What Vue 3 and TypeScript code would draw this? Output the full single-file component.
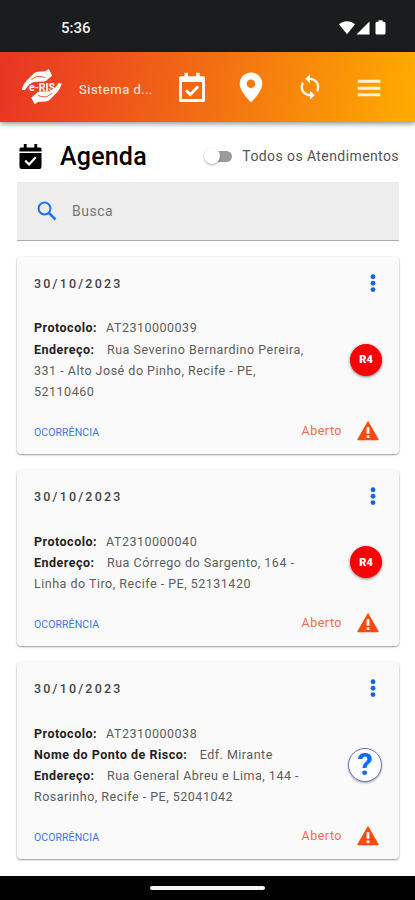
<script setup lang="ts">
interface Field {
  label: string
  lines: string[]
  wide?: boolean
}
interface Visit {
  date: string
  fields: Field[]
  risk: string | null
}

const visits: Visit[] = [
  {
    date: '30/10/2023',
    risk: 'R4',
    fields: [
      { label: 'Protocolo:', lines: ['AT2310000039'] },
      {
        label: 'Endereço:',
        wide: true,
        lines: ['Rua Severino Bernardino Pereira,', '331 - Alto José do Pinho, Recife - PE,', '52110460'],
      },
    ],
  },
  {
    date: '30/10/2023',
    risk: 'R4',
    fields: [
      { label: 'Protocolo:', lines: ['AT2310000040'] },
      {
        label: 'Endereço:',
        wide: true,
        lines: ['Rua Córrego do Sargento, 164 -', 'Linha do Tiro, Recife - PE, 52131420'],
      },
    ],
  },
  {
    date: '30/10/2023',
    risk: null,
    fields: [
      { label: 'Protocolo:', lines: ['AT2310000038'] },
      { label: 'Nome do Ponto de Risco:', wide: true, lines: ['Edf. Mirante'] },
      {
        label: 'Endereço:',
        wide: true,
        lines: ['Rua General Abreu e Lima, 144 -', 'Rosarinho, Recife - PE, 52041042'],
      },
    ],
  },
]
</script>

<template>
  <div class="screen">
    <div class="status">
      <span class="clock">5:36</span>
      <svg class="signals" width="48" height="16" viewBox="0 0 48 16" fill="#fff">
        <path d="M0 4.200C4.600.3 11.400.3 16 4.200L8 14.300z" />
        <path d="M30.500 1.500v13H17.500z" />
        <path d="M39.500.3h4v1.400h1.500a1.500 1.500 0 0 1 1.500 1.500v9.800a1.500 1.500 0 0 1-1.500 1.500h-7a1.500 1.500 0 0 1-1.500-1.500V3.200a1.500 1.500 0 0 1 1.500-1.500h1.500z" />
      </svg>
    </div>

    <header class="topbar">
      <div class="logo">
        <svg width="42" height="40" viewBox="0 0 42 40">
          <defs>
            <g id="hand">
              <path fill="#fff" d="M27.800 2 24.500 4.200 17 4.700C14.800 4.900 13.800 5.500 12.500 6.800L6 13.200C3 16.500 1.800 19 .7 22.500L3.600 23.200 8.200 17.500 12.500 14.900 22 14.600C24.500 14.500 25.500 13.500 27 11.900L31.200 8.700z" />
              <path fill="none" stroke="#e9492a" stroke-width=".9" stroke-linecap="round" d="M10.500 12.600 15.500 9.500h4.800l3.500 1" />
            </g>
          </defs>
          <use href="#hand" />
          <use href="#hand" transform="rotate(180 20.700 19.600)" />
        </svg>
        <span class="logo-name">e-RIS</span>
      </div>
      <span class="app-name">Sistema d...</span>
      <svg class="nav-cal" width="28" height="31" viewBox="0 0 28 31">
        <path fill="none" stroke="#fff" stroke-width="2.800" stroke-linejoin="round" d="M2.500 6h23v22.500h-23z" />
        <path fill="#fff" d="M2 4.500h24v5.500H2zM6.500.8h3.500v5H6.500zM18.200.8h3.500v5h-3.500z" />
        <path fill="none" stroke="#fff" stroke-width="2.800" d="m8 18.300 4.300 4.300 7.800-8.100" />
      </svg>
      <svg class="nav-pin" width="24" height="31" viewBox="0 0 24 31">
        <path fill="#fff" fill-rule="evenodd" d="M12 .5C5.700.5.700 5.500.7 11.700.7 19.500 12 30.300 12 30.300s11.300-10.800 11.300-18.600C23.300 5.500 18.300.5 12 .5zm0 6.900a4.300 4.300 0 1 1 0 8.600 4.300 4.300 0 0 1 0-8.600z" />
      </svg>
      <svg class="nav-sync" width="28" height="28" viewBox="0 0 24 24" fill="#fff">
        <path d="M12 4V1L8 5l4 4V6c3.310 0 6 2.690 6 6 0 1.010-.25 1.970-.7 2.800l1.460 1.460A7.930 7.930 0 0 0 20 12c0-4.420-3.580-8-8-8zm0 14c-3.310 0-6-2.690-6-6 0-1.010.25-1.970.7-2.800L5.240 7.740A7.930 7.930 0 0 0 4 12c0 4.420 3.580 8 8 8v3l4-4-4-4v3z" />
      </svg>
      <svg class="nav-menu" width="24" height="18" viewBox="0 0 24 18">
        <path stroke="#fff2dc" stroke-width="3" d="M.7 2.300h22.600M.7 9.200h22.600M.7 15.800h22.600" />
      </svg>
    </header>

    <main>
      <div class="heading">
        <svg class="cal" width="23" height="27" viewBox="0 0 24 27" preserveAspectRatio="none">
          <path d="M5 1h3v3.500h8V1h3v3.500h3a1.500 1.500 0 0 1 1.500 1.500v2.500H.5V6A1.500 1.500 0 0 1 2 4.500h3zM.5 10h23v13.700A2.300 2.300 0 0 1 21.200 26H2.800A2.300 2.300 0 0 1 .5 23.700z" />
          <path fill="none" stroke="#fff" stroke-width="2.300" d="m6.500 17.700 4 3.800 7-7.300" />
        </svg>
        <h1>Agenda</h1>
        <span class="toggle"><span class="knob"></span></span>
        <span class="toggle-label">Todos os Atendimentos</span>
      </div>

      <div class="search">
        <svg width="20" height="20" viewBox="0 0 20 20" fill="none" stroke="#226ff5">
          <circle cx="7.500" cy="7.500" r="5.900" stroke-width="2" />
          <path d="m12 12 6.500 6.500" stroke-width="2.500" />
        </svg>
        <span>Busca</span>
      </div>

      <article v-for="(v, i) in visits" :key="i" class="card">
        <div class="card-top">
          <span class="date">{{ v.date }}</span>
          <svg width="6" height="20" viewBox="0 0 6 20" fill="#1565e8">
            <circle cx="3" cy="3.800" r="2.450" />
            <circle cx="3" cy="10.200" r="2.450" />
            <circle cx="3" cy="16.600" r="2.450" />
          </svg>
        </div>
        <div class="card-body">
          <div class="fields">
            <p v-for="f in v.fields" :key="f.label">
              <b :class="{ wide: f.wide }">{{ f.label }}</b>
              <template v-for="(line, n) in f.lines" :key="n"><br v-if="n > 0" />{{ line }}</template>
            </p>
          </div>
          <span v-if="v.risk" class="risk">{{ v.risk }}</span>
          <span v-else class="unknown">?</span>
        </div>
        <div class="card-foot">
          <span class="kind">OCORRÊNCIA</span>
          <span class="state">Aberto</span>
          <svg width="22" height="20" viewBox="0 0 22 20">
            <path fill="#fa4b0c" stroke="#fa4b0c" stroke-width="1.400" stroke-linejoin="round" d="M11 1.200 21 18.500H1z" />
            <path fill="#fff" d="M9.600 6.300h2.800v6.500H9.600zM9.600 14.400h2.800v2.700H9.600z" />
          </svg>
        </div>
      </article>
    </main>

    <div class="gesture"><span></span></div>
  </div>
</template>

<style>
body {
  margin: 0;
  background: #fff;
}
</style>

<style scoped>
.screen {
  width: 415px;
  height: 900px;
  display: flex;
  flex-direction: column;
  overflow: hidden;
  background: #fff;
  font-family: Roboto, 'Liberation Sans', sans-serif;
}
svg {
  display: block;
  flex: none;
}
.status {
  height: 52px;
  flex: none;
  box-sizing: border-box;
  display: flex;
  justify-content: space-between;
  align-items: flex-start;
  padding: 20px 28px 0 61px;
  background: #1b1c1e;
}
.clock {
  color: #f1f1f1;
  font-size: 15px;
  line-height: 17px;
  font-weight: 500;
}
.topbar {
  height: 70px;
  flex: none;
  display: flex;
  align-items: center;
  background: linear-gradient(100deg, #e93424 0%, #f26b14 48%, #ffac00 100%);
  box-shadow: 0 2px 5px rgba(0, 0, 0, 0.42);
  box-sizing: border-box;
  padding-left: 21px;
  z-index: 1;
}
.logo {
  position: relative;
  width: 42px;
  height: 40px;
}
.logo-name {
  position: absolute;
  left: 8px;
  top: 14px;
  font-size: 10.500px;
  line-height: 13px;
  font-weight: 700;
  color: #fff;
}
.app-name {
  width: 84px;
  margin: 4px 0 0 16px;
  font-size: 13px;
  letter-spacing: 0.5px;
  color: #fff0e6;
  white-space: nowrap;
}
.nav-cal {
  margin-left: 15px;
}
.nav-pin,
.nav-sync,
.nav-menu {
  margin-left: 33px;
}
.nav-menu {
  margin-top: 1px;
}
main {
  flex: 1;
  padding: 0 16px 0 17px;
}
.heading {
  display: flex;
  align-items: center;
  height: 60px;
}
.cal {
  margin: 9px 0 0 2px;
}
h1 {
  margin: 9px 0 0 18px;
  width: 148px;
  font-size: 25px;
  font-weight: 500;
  line-height: 32px;
  letter-spacing: 0.2px;
  color: #000;
}
.toggle {
  position: relative;
  flex: none;
  width: 25px;
  height: 11px;
  margin-top: 9px;
  border-radius: 6px;
  background: #9b9b9b;
}
.knob {
  position: absolute;
  left: -3px;
  top: -3px;
  width: 16px;
  height: 16px;
  border-radius: 50%;
  background: #fff;
  box-shadow: 0 1px 2px rgba(0, 0, 0, 0.35);
}
.toggle-label {
  margin: 8px 0 0 10px;
  font-size: 14px;
  letter-spacing: 0.41px;
  color: #555;
  white-space: nowrap;
}
.search {
  height: 59px;
  box-sizing: border-box;
  display: flex;
  align-items: center;
  gap: 16px;
  padding-left: 20px;
  background: #ededed;
  border-bottom: 1px solid #aaa;
  color: #757575;
  font-size: 14px;
  letter-spacing: 0.5px;
}
.search span {
  margin-left: -1px;
}
.card {
  box-sizing: border-box;
  margin-top: 16px;
  padding: 15px 20px 11px 17px;
  border-radius: 4px;
  background: #fafafa;
  box-shadow: 0 1px 2px rgba(0, 0, 0, 0.38), 0 0 2px rgba(0, 0, 0, 0.08);
}
.card-top {
  display: flex;
  justify-content: space-between;
  align-items: center;
  height: 22px;
  padding-right: 3px;
}
.date {
  font-size: 12.500px;
  font-weight: 500;
  letter-spacing: 2.200px;
  color: #444;
}
.card-body {
  display: flex;
  justify-content: space-between;
  align-items: center;
  margin-top: 23.400px;
}
.fields {
  font-size: 12.500px;
  line-height: 21.200px;
  letter-spacing: 0.5px;
  color: #5c5c5c;
  white-space: nowrap;
}
p {
  margin: 0;
}
b {
  font-weight: 700;
  color: #222;
  margin-right: 5px;
}
.fields b {
  margin-right: 9px;
}
.fields b.wide {
  margin-right: 12.400px;
}
.risk,
.unknown {
  flex: none;
  box-sizing: border-box;
  display: flex;
  align-items: center;
  justify-content: center;
  margin-right: -3px;
  border-radius: 50%;
}
.risk {
  width: 32px;
  height: 32px;
  background: #fb0006;
  color: #fff;
  font-size: 11px;
  font-weight: 900;
  box-shadow: 0 1px 3px rgba(0, 0, 0, 0.5);
}
.unknown {
  width: 34px;
  height: 34px;
  border: 1px solid #6573c4;
  background: #fff;
  color: #0b6bfa;
  font-size: 31px;
  line-height: 32px;
  font-weight: 700;
  box-shadow: 0 1px 2px rgba(0, 0, 0, 0.35);
}
.card-foot {
  display: flex;
  align-items: center;
  height: 24px;
  margin-top: 17px;
}
.kind {
  flex: 1;
  padding-top: 2px;
  font-size: 10.500px;
  letter-spacing: 0.08px;
  color: #3a76f0;
}
.state {
  margin: -2px 15px 0 0;
  font-size: 12.500px;
  letter-spacing: 0.5px;
  color: #f76b4c;
}
.gesture {
  height: 24px;
  flex: none;
  display: flex;
  justify-content: center;
  align-items: center;
  background: #000;
}
.gesture span {
  width: 115px;
  height: 4px;
  border-radius: 2px;
  background: #f5f5f5;
}
</style>
